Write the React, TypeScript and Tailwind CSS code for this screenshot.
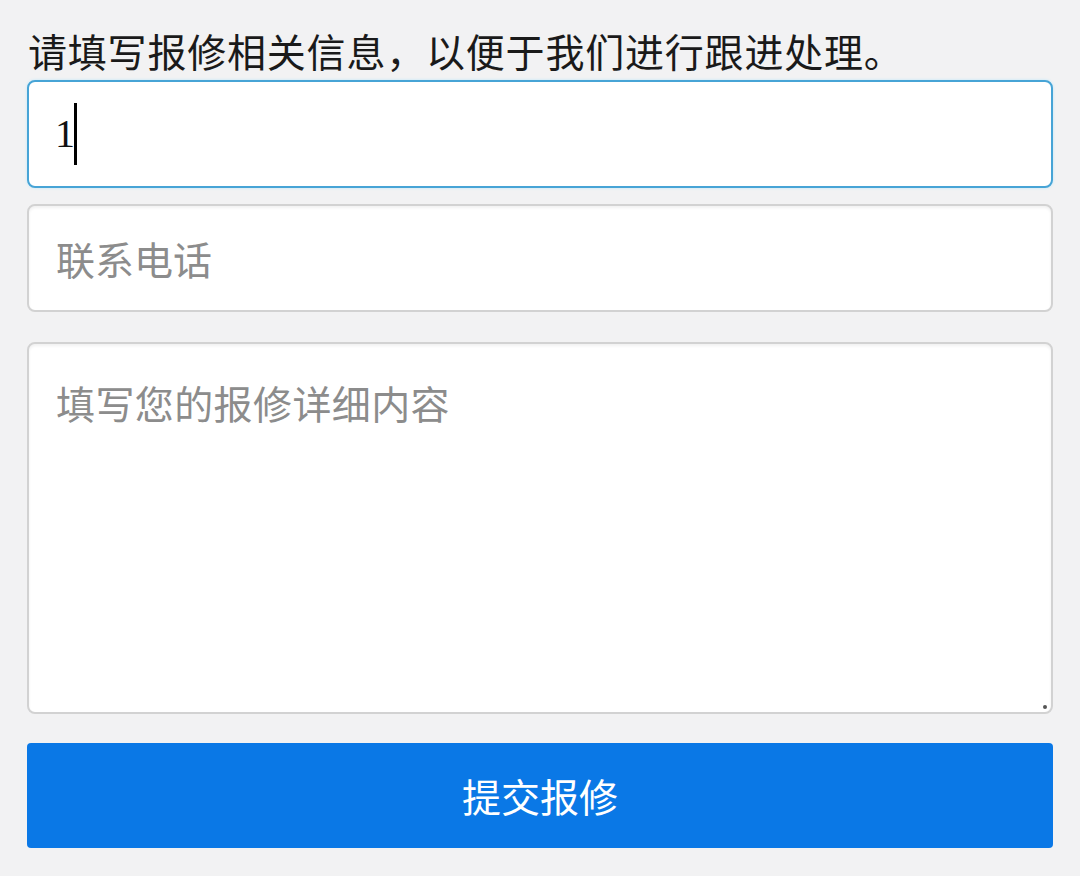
import React from 'react';

const cjk = { fontFamily: '"Noto Sans CJK SC", "Noto Sans", sans-serif' };

const App: React.FC = () => {
  return (
    <div className="w-[1080px] h-[876px] bg-[#f2f2f3] overflow-hidden" style={cjk}>
      <div className="flex flex-col px-[27px] pt-[26px]">
        {/* Heading */}
        <p className="text-[39px] leading-[48px] text-[#1a1a1a] pl-[1px] tracking-[0.8px]">
          请填写报修相关信息，以便于我们进行跟进处理。
        </p>

        {/* Name input (focused) */}
        <div className="mt-[6px] h-[108px] rounded-[8px] border-2 border-[#47a4d6] bg-white shadow-[0_0_3px_#bfe8fa] flex items-center pl-[26px]">
          <span className="text-[40px] leading-none text-[#111]" style={{ fontFamily: '"Liberation Serif", serif' }}>1</span>
          <span className="w-[3px] h-[62px] bg-black -ml-[1px]" />
        </div>

        {/* Phone input */}
        <div className="mt-[16px] h-[108px] rounded-[8px] border-2 border-[#d2d2d2] bg-white shadow-[inset_0_2px_3px_rgba(0,0,0,0.06)] flex items-center pl-[27px]">
          <span className="text-[39px] leading-none text-[#8c8c8c]">联系电话</span>
        </div>

        {/* Detail textarea */}
        <div className="relative mt-[30px] h-[372px] rounded-[8px] border-2 border-[#d2d2d2] bg-white shadow-[inset_0_2px_3px_rgba(0,0,0,0.06)] pl-[27px] pt-[34px]">
          <span className="text-[39px] leading-[48px] tracking-[0.4px] text-[#8c8c8c]">填写您的报修详细内容</span>
          <span className="absolute right-[4px] bottom-[3px] w-[4px] h-[4px] rounded-full bg-[#555]" />
        </div>

        {/* Submit */}
        <button className="mt-[29px] h-[105px] rounded-[4px] bg-[#0a78e6] text-white text-[39px] leading-none flex items-center justify-center" style={cjk}>
          提交报修
        </button>
      </div>
    </div>
  );
};

export default App;
